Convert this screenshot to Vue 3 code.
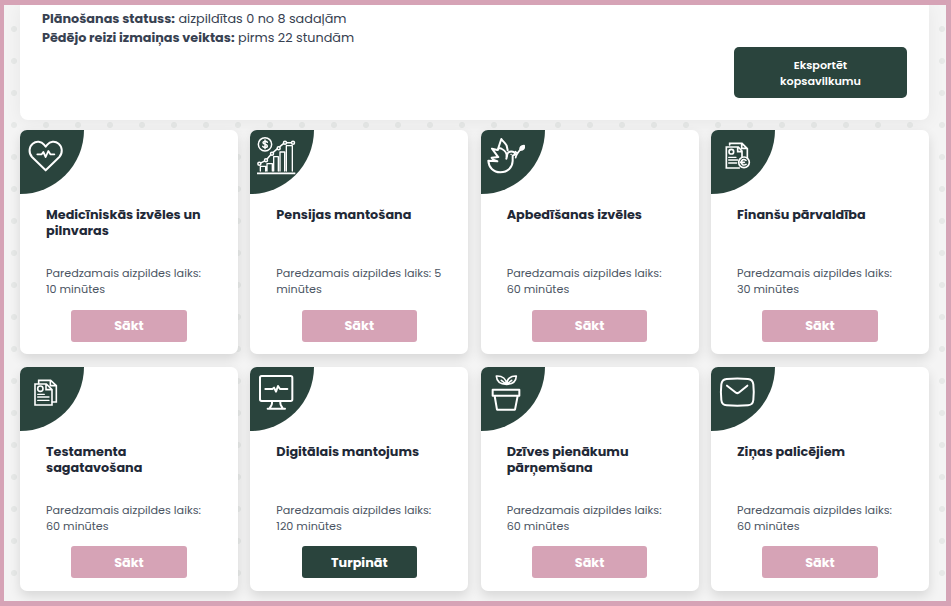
<script setup>
const wait = 'Paredzamais aizpildes laiks:'
const cards = [
  { icon: 'heart', title: ['Medicīniskās izvēles un', 'pilnvaras'], time: [wait, '10 minūtes'], action: 'Sākt' },
  { icon: 'chart', title: ['Pensijas mantošana'], time: [wait + ' 5', 'minūtes'], action: 'Sākt' },
  { icon: 'dove', title: ['Apbedīšanas izvēles'], time: [wait, '60 minūtes'], action: 'Sākt' },
  { icon: 'finance', title: ['Finanšu pārvaldība'], time: [wait, '30 minūtes'], action: 'Sākt' },
  { icon: 'docs', title: ['Testamenta', 'sagatavošana'], time: [wait, '60 minūtes'], action: 'Sākt' },
  { icon: 'monitor', title: ['Digitālais mantojums'], time: [wait, '120 minūtes'], action: 'Turpināt', active: true },
  { icon: 'plant', title: ['Dzīves pienākumu', 'pārņemšana'], time: [wait, '60 minūtes'], action: 'Sākt' },
  { icon: 'mail', title: ['Ziņas palicējiem'], time: [wait, '60 minūtes'], action: 'Sākt' },
]
</script>

<template>
  <main class="page">
    <section class="summary">
      <div class="status">
        <p><b>Plānošanas statuss:</b> aizpildītas 0 no 8 sadaļām</p>
        <p><b>Pēdējo reizi izmaiņas veiktas:</b> pirms 22 stundām</p>
      </div>
      <button class="export"><span>Eksportēt</span><span>kopsavilkumu</span></button>
    </section>
    <section class="grid">
      <article v-for="card in cards" :key="card.icon" class="card">
        <div class="badge">
          <svg viewBox="15 15 192 192" fill="none" stroke="#fff" stroke-width="6" stroke-linecap="round" stroke-linejoin="round">
            <g v-if="card.icon === 'heart'">
              <path d="M92 136 51 96C40 84 42 65 53 56c11-9 26-7 34 3l5 6 5-6c8-10 23-12 34-3 11 9 13 28 2 40Z" />
              <path d="M67 88h13l5-7 7 15 8-18 6 10h12" stroke-width="5.5" />
            </g>
            <g v-else-if="card.icon === 'chart'" stroke-width="4.5">
              <circle cx="60" cy="58" r="20" />
              <path d="M67 52c-2-4-13-4-13 1 0 6 13 4 13 10 0 6-12 6-14 1M60 45v26" />
              <path d="M36 145h115" stroke-width="5.5" stroke-linecap="butt" />
              <path d="M46 138v-14h16v14M66 138v-22h16v22M86 138V95h14v43M105 138V81h14v57M124 138V62h18v76" stroke-width="4" />
              <path d="m43 116 20-10 18-21 20-17 18-15 25 0" />
              <g fill="#2a443d"><circle cx="43" cy="116" r="4.5" /><circle cx="63" cy="106" r="4.5" /><circle cx="81" cy="86" r="4.5" /><circle cx="101" cy="70" r="4.5" /><circle cx="120" cy="53" r="4.5" /><circle cx="144" cy="53" r="4.5" /></g>
            </g>
            <g v-else-if="card.icon === 'dove'">
              <path d="M65 94 48 71 64 75M67 96 47 98c4 7 9 10 17 11l-27-2c1 20 15 35 36 35 23 0 36-15 37-34V92l8-4c-3-11-20-12-24-1l-3 14" />
              <path d="M65 75 76 42c5 8 12 11 16 20l3 14M65 75c3-6 8-6 13-3 9 5 15 10 14 22" />
              <path d="M119 98c1-9 6-15 14-24M124 86l-6-6" stroke-width="5" />
              <path d="M133 75c-2-9 3-12 11-13 1 7-1 12-11 13Z" fill="#fff" />
              <circle cx="105" cy="88" r="1" stroke-width="2" />
            </g>
            <g v-else-if="card.icon === 'finance'" stroke-linejoin="miter" stroke-width="5">
              <path d="M71 60v-5h37l16 16v28M107 55v15h16" />
              <path d="M100 129H61V66h36l11 12v18M95 67v13h12" />
              <circle cx="76" cy="80" r="7" />
              <path d="M68 97h22M68 105h27M68 114h24" stroke-width="4" />
              <circle cx="114" cy="112" r="16" fill="#2a443d" />
              <path d="M120 106c-8-6-14 0-14 6s6 11 14 6M103 112h12" />
            </g>
            <g v-else-if="card.icon === 'docs'" stroke-linejoin="miter" stroke-width="4.8">
              <path d="M71 65V55h36l17 16v49h-12M106 55v16h17" />
              <path d="M60 66h34l17 17v46H60ZM93 67v16h17" />
              <circle cx="76" cy="80" r="8" />
              <path d="M68 97h20M68 105h34M68 115h34" stroke-width="4" />
            </g>
            <g v-else-if="card.icon === 'monitor'">
              <rect x="45" y="42" width="97" height="75" rx="5" />
              <path d="M81 118v6c0 7-5 9-7 15M106 118v6c0 7 5 9 7 15M68 140h52" />
              <path d="M61 81h21l5-4 6 12 6-17 6 9h22" />
            </g>
            <g v-else-if="card.icon === 'plant'">
              <path d="M50 83h80v18H50ZM56 102l7 41h54l8-41" />
              <path d="M92 67c-1-16-12-26-31-25 1 16 12 25 31 25ZM92 67c0-16 11-26 29-25-1 16-12 25-29 25ZM76 55l16 12 15-12" stroke-width="5" />
            </g>
            <g v-else>
              <path d="M62 51c22-2 42-2 64 0 10 1 15 7 16 16 2 18 2 30 0 47-1 10-6 15-16 16-22 2-42 2-64 0-10-1-15-6-16-16-2-17-2-29 0-47 1-9 6-15 16-16Z" />
              <path d="m63 71 27 21c3 2 5 2 8 0l26-21" />
            </g>
          </svg>
        </div>
        <h2><span v-for="line in card.title" :key="line">{{ line }}</span></h2>
        <p class="time"><span v-for="line in card.time" :key="line">{{ line }}</span></p>
        <button class="action" :class="{ active: card.active }">{{ card.action }}</button>
      </article>
    </section>
  </main>
</template>

<style>
body { overflow: hidden; }
</style>
<style scoped>
* { box-sizing: border-box; margin: 0; }
.page {
  width: 951px; height: 606px; overflow: hidden;
  border: solid #d6a3b6; border-width: 5px 5px 5px 4px;
  padding: 0 17px 0 16px;
  background: #f4f4f4 radial-gradient(circle at 16px 16px, #e7e9e8 2.7px, transparent 3.3px) -6px 8px / 32px 32px;
  font-family: Poppins, Inter, sans-serif;
}
button { border: 0; font-family: inherit; color: #fff; font-weight: 700; }
.summary {
  height: 115px; padding: 4px 22px 0; display: flex; justify-content: space-between;
  background: #fff; border-radius: 0 0 8px 8px; box-shadow: 0 2px 18px rgba(0, 0, 0, .06);
}
.status { color: #374151; font-size: 12.8px; line-height: 19.2px; white-space: nowrap; }
.export {
  width: 173px; height: 51px; margin-top: 38px; border-radius: 5px; background: #2a443d;
  font-size: 11.2px; line-height: 16px; padding: 1px 0 0; font-weight: 600;
}
.export span { display: block; }
.grid {
  margin-top: 10px; display: grid; grid-template-columns: repeat(4, 218px);
  justify-content: space-between; grid-auto-rows: 224px; row-gap: 12.6px; position: relative;
}
.card {
  background: #fff; border-radius: 7px; box-shadow: 0 5px 12px rgba(0, 0, 0, .12);
  display: flex; flex-direction: column; align-items: flex-start; padding: 0 26px;
}
.badge { width: 64px; height: 64px; margin-left: -26px; background: #2a443d; border-radius: 7px 0 64px 0; }
.badge svg { display: block; width: 64px; height: 64px; }
h2 { margin-top: 13px; height: 32px; font-size: 12.8px; line-height: 16px; color: #1f2937; white-space: nowrap; }
h2 span, .time span { display: block; }
.time { margin-top: 26px; height: 32px; font-size: 11.2px; line-height: 16px; color: #4b5563; white-space: nowrap; }
.action { align-self: center; width: 115.4px; height: 32px; margin-top: 12.7px; padding: .4px 0 0; border-radius: 3px; background: #d6a3b6; font-size: 12.8px; line-height: 32px; }
.active { background: #2a443d; }
</style>
